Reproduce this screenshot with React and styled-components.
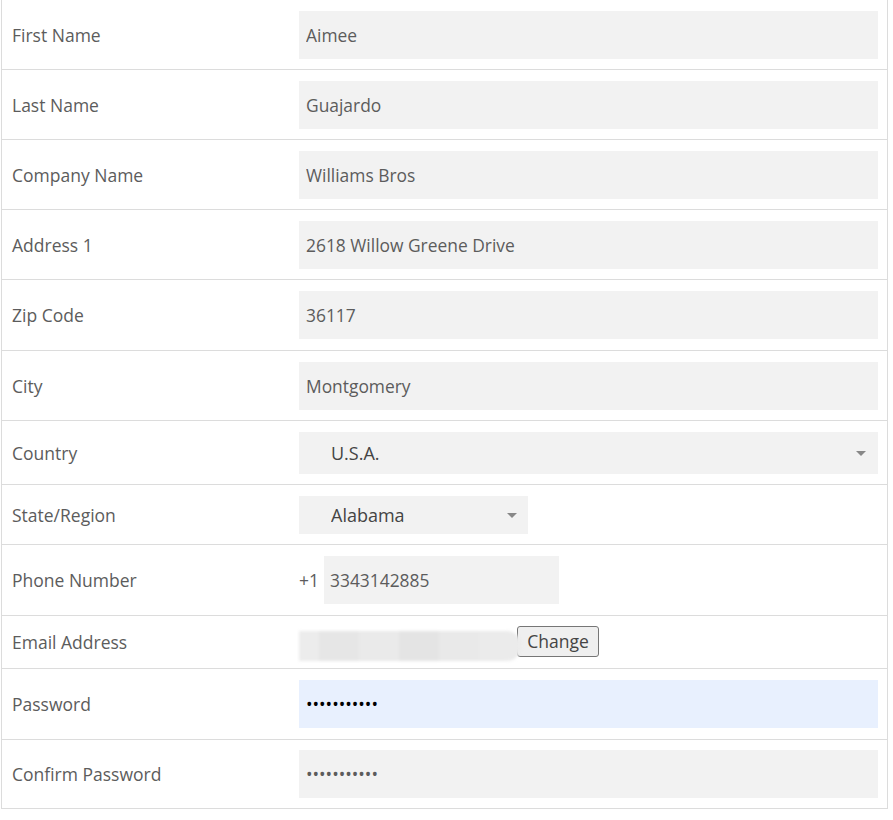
import React from "react";
import styled, { createGlobalStyle } from "styled-components";

const Global = createGlobalStyle`
  html, body { margin: 0; padding: 0; background: #fff; }
  body { font-family: "Open Sans", "Noto Sans", sans-serif; }
`;

const Table = styled.div`
  margin-left: 1px;
  width: 887px;
  box-sizing: border-box;
  border-left: 1px solid #dcdcdc;
  border-right: 1px solid #dcdcdc;
  border-bottom: 1px solid #dcdcdc;
`;

const Row = styled.div`
  display: grid;
  grid-template-columns: 297px 1fr;
  align-items: center;
  min-height: ${(p) => p.$h}px;
  box-sizing: border-box;
  border-top: ${(p) => (p.$first ? "none" : "1px solid #dcdcdc")};
`;

const Label = styled.div`
  padding-left: 10px;
  font-size: 17.5px;
  color: #5c5c5c;
`;

const Cell = styled.div`
  padding-right: 9px;
  display: flex;
  align-items: center;
`;

const TextInput = styled.input`
  box-sizing: border-box;
  width: ${(p) => p.$w || "100%"};
  height: 48px;
  border: none;
  outline: none;
  background: ${(p) => (p.$autofill ? "#e8f0fe" : "#f2f2f2")};
  padding: 0 ${(p) => p.$pl || 7}px;
  font-family: "Open Sans", "Noto Sans", sans-serif;
  font-size: 17.4px;
  color: ${(p) => (p.$autofill ? "#000" : "#5c5c5c")};
`;

const SelectWrap = styled.div`
  position: relative;
  width: ${(p) => p.$w || "100%"};
  height: ${(p) => p.$h}px;
`;

const Select = styled.select`
  appearance: none;
  -webkit-appearance: none;
  box-sizing: border-box;
  width: 100%;
  height: 100%;
  border: none;
  outline: none;
  background: #f2f2f2;
  padding: 0 0 0 32px;
  font-family: "Open Sans", "Noto Sans", sans-serif;
  font-size: 18px;
  color: #444;
`;

const Arrow = styled.span`
  position: absolute;
  right: ${(p) => p.$r}px;
  top: 50%;
  margin-top: -2px;
  width: 0;
  height: 0;
  border-left: 5px solid transparent;
  border-right: 5px solid transparent;
  border-top: 5px solid #888;
  pointer-events: none;
`;

const Prefix = styled.span`
  font-size: 17.5px;
  color: #5c5c5c;
  width: 25px;
  flex: none;
`;

const Blurred = styled.div`
  width: 222px;
  height: 30px;
  margin-top: 8px;
  background: linear-gradient(
    90deg,
    #ececec 0px, #ececec 20px,
    #e6e6e6 20px, #e6e6e6 60px,
    #eaeaea 60px, #eaeaea 100px,
    #e4e4e4 100px, #e4e4e4 140px,
    #e9e9e9 140px, #e9e9e9 180px,
    #ebebeb 180px, #ebebeb 222px
  );
  filter: blur(1.5px);
  border-radius: 0 14px 14px 0;
`;

const Button = styled.button`
  box-sizing: border-box;
  height: 31px;
  width: 82px;
  margin-left: -4px;
  margin-top: -2px;
  border: 1px solid #767676;
  border-radius: 3px;
  background: #efefef;
  font-family: "Open Sans", "Noto Sans", sans-serif;
  font-size: 17.5px;
  color: #444;
  padding: 0;
`;

const fields = [
  { label: "First Name", value: "Aimee", h: 69 },
  { label: "Last Name", value: "Guajardo", h: 70 },
  { label: "Company Name", value: "Williams Bros", h: 70 },
  { label: "Address 1", value: "2618 Willow Greene Drive", h: 70 },
  { label: "Zip Code", value: "36117", h: 71 },
  { label: "City", value: "Montgomery", h: 70 },
];

export default function App() {
  return (
    <>
      <Global />
      <Table>
        {fields.map((f, i) => (
          <Row key={f.label} $h={f.h} $first={i === 0}>
            <Label>{f.label}</Label>
            <Cell>
              <TextInput defaultValue={f.value} />
            </Cell>
          </Row>
        ))}
        <Row $h={64}>
          <Label>Country</Label>
          <Cell>
            <SelectWrap $h={42}>
              <Select defaultValue="USA">
                <option value="USA">U.S.A.</option>
              </Select>
              <Arrow $r={12} />
            </SelectWrap>
          </Cell>
        </Row>
        <Row $h={60}>
          <Label>State/Region</Label>
          <Cell>
            <SelectWrap $h={38} $w="229px">
              <Select defaultValue="AL">
                <option value="AL">Alabama</option>
              </Select>
              <Arrow $r={11} />
            </SelectWrap>
          </Cell>
        </Row>
        <Row $h={71}>
          <Label>Phone Number</Label>
          <Cell>
            <Prefix>+1</Prefix>
            <TextInput $w="235px" $pl={6} defaultValue="3343142885" />
          </Cell>
        </Row>
        <Row $h={53}>
          <Label>Email Address</Label>
          <Cell>
            <Blurred />
            <Button type="button">Change</Button>
          </Cell>
        </Row>
        <Row $h={71}>
          <Label>Password</Label>
          <Cell>
            <TextInput type="password" $autofill defaultValue="aaaaaaaaaaa" />
          </Cell>
        </Row>
        <Row $h={69}>
          <Label>Confirm Password</Label>
          <Cell>
            <TextInput type="password" defaultValue="aaaaaaaaaaa" />
          </Cell>
        </Row>
      </Table>
    </>
  );
}
